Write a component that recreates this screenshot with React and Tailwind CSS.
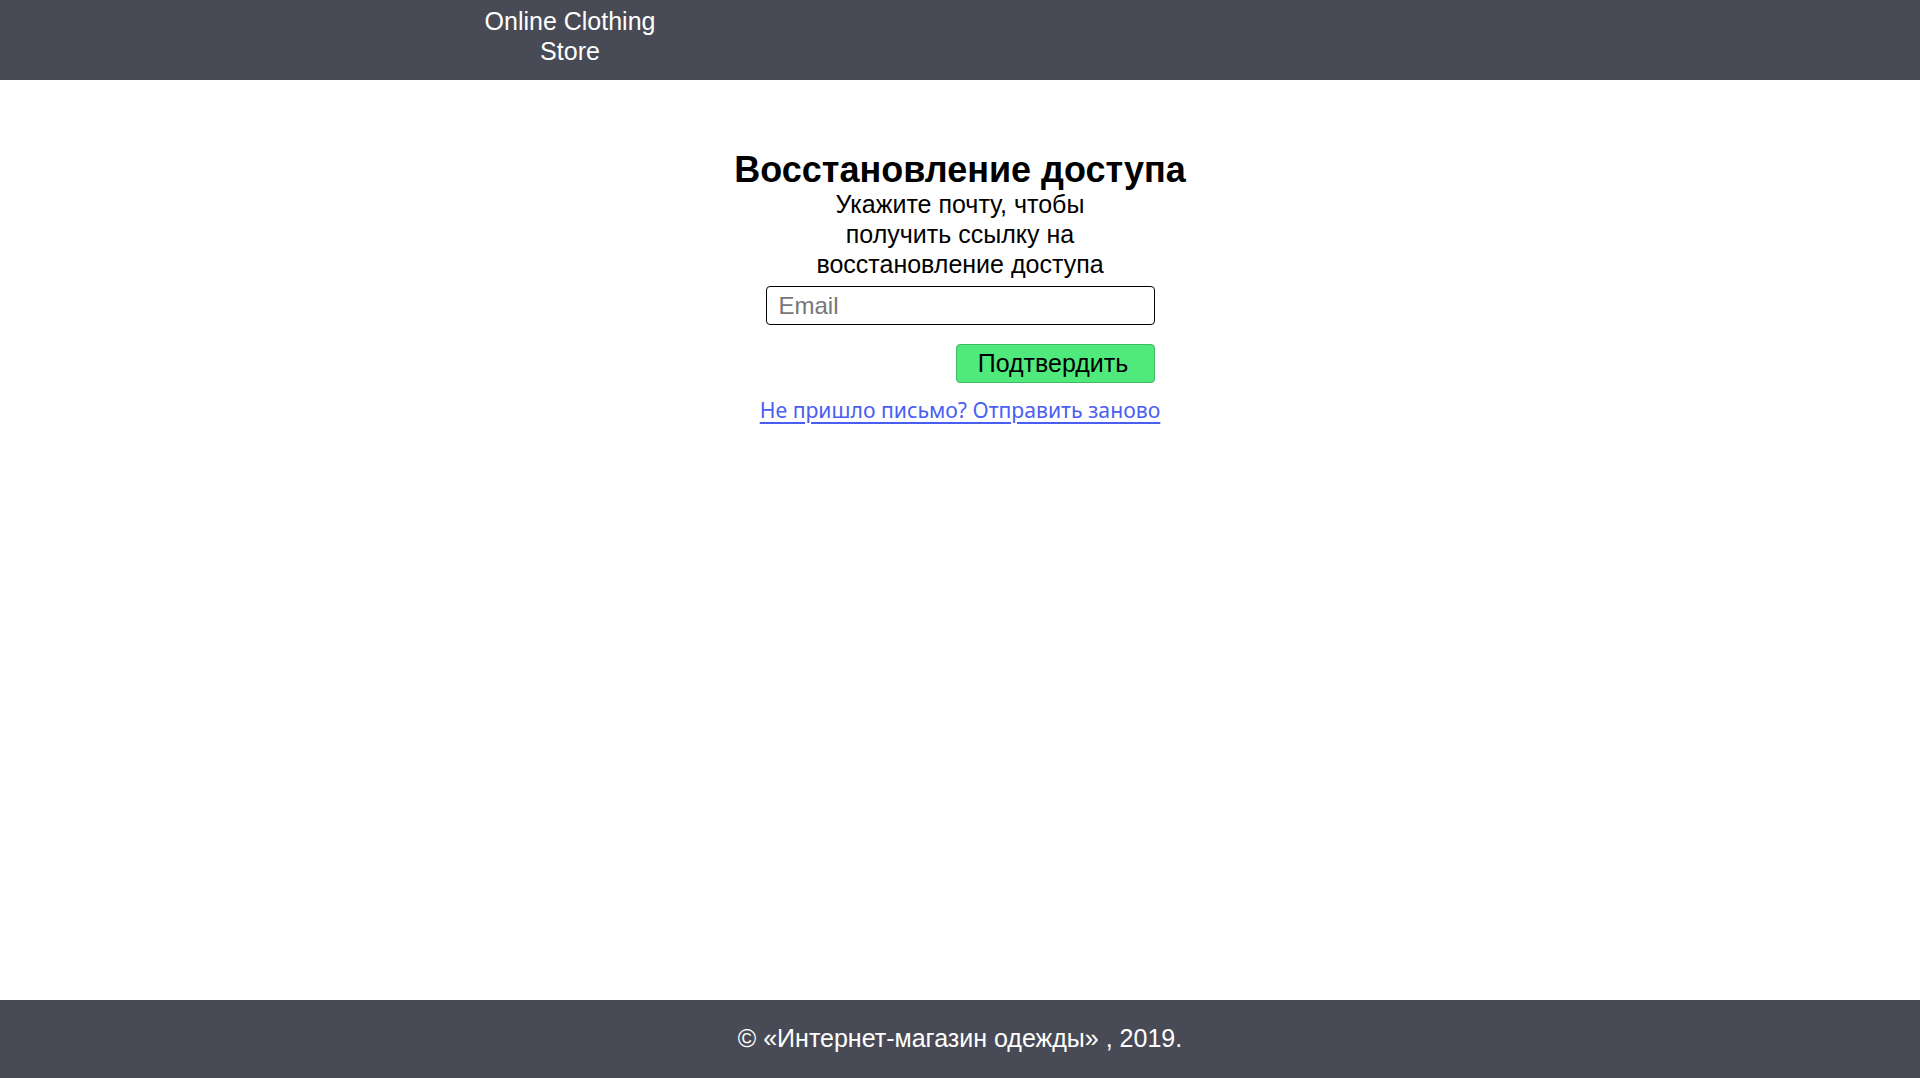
export default function App() {
  return (
    <div className="min-h-screen flex flex-col bg-white" style={{ fontFamily: '"Liberation Sans", Arial, sans-serif' }}>
      <header className="h-[80px] bg-[#484b55] shrink-0">
        <div className="w-[1140px] mx-auto flex">
          <div className="w-[180px] ml-[90px] pt-[6px] text-center text-white text-[25px] leading-[30px]">
            Online Clothing Store
          </div>
        </div>
      </header>
      <main className="flex-1 flex flex-col items-center pt-[70px]">
        <h1 className="text-[36px] font-bold text-black leading-[40px]">Восстановление доступа</h1>
        <p className="w-[300px] text-center text-[25px] leading-[30px] text-black -mt-[1px]">
          Укажите почту, чтобы получить ссылку на восстановление доступа
        </p>
        <div className="w-[389px] mt-[7px] flex flex-col items-end">
          <input
            type="email"
            placeholder="Email"
            className="w-full h-[39px] border border-black rounded-[4px] px-[12px] text-[24px] placeholder:text-[#777] outline-none"
          />
          <button className="mt-[19px] w-[199px] h-[39px] bg-[#50ea7c] border border-[#3fb863] rounded-[4px] text-[25px] text-black leading-none pr-[4px]">
            Подтвердить
          </button>
        </div>
        <a
          href="#"
          className="mt-[11px] text-[21.2px] text-[#4a5ef2] underline underline-offset-[4px]"
          style={{ fontFamily: '"Noto Sans", sans-serif' }}
        >
          Не пришло письмо? Отправить заново
        </a>
      </main>
      <footer className="h-[78px] bg-[#484b55] shrink-0 flex items-center justify-center text-white text-[25px]">
        © «Интернет-магазин одежды» , 2019.
      </footer>
    </div>
  );
}
